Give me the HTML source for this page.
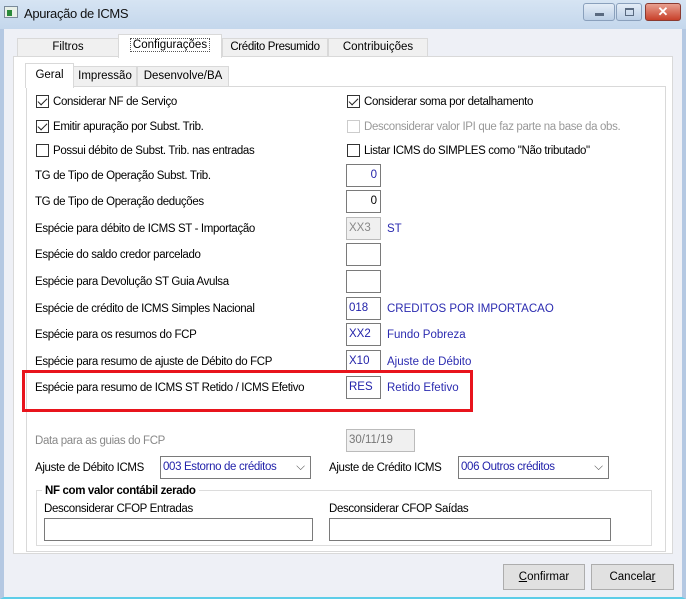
<!DOCTYPE html>
<html><head><meta charset="utf-8"><style>
*{box-sizing:border-box;margin:0;padding:0}
body{width:686px;height:599px;overflow:hidden;background:#eef0f6;font-family:"Liberation Sans",sans-serif;font-size:11.5px;color:#000;position:relative}
.a{position:absolute;white-space:nowrap}
.t{letter-spacing:-0.35px}
div.t,div.blue{margin-top:2px}
.cb{position:absolute;width:13px;height:13px;border:1px solid #333;background:#fff}
.cb.c::after{content:"";position:absolute;left:3px;top:0px;width:4px;height:8px;border:solid #222;border-width:0 1.5px 1.5px 0;transform:rotate(45deg)}
.in{position:absolute;height:23px;border:1px solid #7a7a7a;background:#fff;font-size:11.5px;line-height:21px;padding-left:2px;color:#2222aa}
.blue{color:#2b2bb0}
.btn{position:absolute;height:26px;border:1px solid #adadad;background:#e1e1e1;text-align:center;line-height:24px}
</style></head><body>
<div class="a" style="left:0;top:0;width:686px;height:599px;border:2px solid #b4c8e2;border-left-width:4px;border-right-width:4px;border-bottom-color:#5ccde8"></div>
<div class="a" style="left:0;top:0;width:686px;height:29px;background:linear-gradient(#d6e4f3,#c4d7ec)"></div>
<div class="a" style="left:4px;top:6px;width:14px;height:12px;background:#e8f0e8;border:1px solid #7a8a9a"><div style="position:absolute;left:2px;top:3px;width:5px;height:6px;background:#2a8a3a"></div></div>
<div class="a t" style="left:24px;top:6px;font-size:13px;color:#111;margin-top:0">Apuração de ICMS</div>
<div class="a" style="left:583px;top:3px;width:32px;height:18px;border:1px solid #8aa0bc;border-radius:3px;background:linear-gradient(#e4edf7,#bccfe6)"><div style="position:absolute;left:11px;top:9px;width:9px;height:3px;background:#5a6a80"></div></div>
<div class="a" style="left:616px;top:3px;width:26px;height:18px;border:1px solid #8aa0bc;border-radius:3px;background:linear-gradient(#e4edf7,#bccfe6)"><div style="position:absolute;left:8px;top:4px;width:9px;height:8px;border:1px solid #5a6a80;border-top-width:2px"></div></div>
<div class="a" style="left:645px;top:3px;width:36px;height:18px;border:1px solid #8a3a30;border-radius:3px;background:linear-gradient(#e8a090,#c8402a);color:#fff;font-weight:bold;text-align:center;line-height:16px;font-size:13px">✕</div>
<div class="a" style="left:13px;top:56px;width:660px;height:498px;background:#fff;border:1px solid #d9d9d9"></div>
<div class="a" style="left:17px;top:38px;width:102px;height:19px;background:#f0f0f0;border:1px solid #d9d9d9;text-align:center;line-height:17px">Filtros</div>
<div class="a" style="left:222px;top:38px;width:106px;height:19px;background:#f0f0f0;border:1px solid #d9d9d9;text-align:center;line-height:17px"><span class="t">Crédito Presumido</span></div>
<div class="a" style="left:328px;top:38px;width:100px;height:19px;background:#f0f0f0;border:1px solid #d9d9d9;text-align:center;line-height:17px">Contribuições</div>
<div class="a" style="left:118px;top:34px;width:104px;height:24px;background:#fff;border:1px solid #d9d9d9;border-bottom:none;text-align:center;line-height:20px"><span style="border:1px dotted #555;padding:0 2px">Configurações</span></div>
<div class="a" style="left:26px;top:86px;width:640px;height:466px;background:#fff;border:1px solid #d9d9d9"></div>
<div class="a" style="left:73px;top:66px;width:64px;height:21px;background:#f0f0f0;border:1px solid #d9d9d9;text-align:center;line-height:19px">Impressão</div>
<div class="a" style="left:137px;top:66px;width:92px;height:21px;background:#f0f0f0;border:1px solid #d9d9d9;text-align:center;line-height:19px">Desenvolve/BA</div>
<div class="a" style="left:25px;top:63px;width:49px;height:25px;background:#fff;border:1px solid #d9d9d9;border-bottom:none;text-align:center;line-height:22px">Geral</div>
<div class="cb c" style="left:36px;top:95px"></div><div class="a t" style="left:53px;top:94px">Considerar NF de Serviço</div>
<div class="cb c" style="left:36px;top:120px"></div><div class="a t" style="left:53px;top:119px">Emitir apuração por Subst. Trib.</div>
<div class="cb" style="left:36px;top:144px"></div><div class="a t" style="left:53px;top:143px">Possui débito de Subst. Trib. nas entradas</div>
<div class="cb c" style="left:347px;top:95px"></div><div class="a t" style="left:364px;top:94px">Considerar soma por detalhamento</div>
<div class="cb" style="left:347px;top:120px;border-color:#ccc"></div><div class="a t" style="left:364px;top:119px;color:#999">Desconsiderar valor IPI que faz parte na base da obs.</div>
<div class="cb" style="left:347px;top:144px"></div><div class="a t" style="left:364px;top:143px">Listar ICMS do SIMPLES como "Não tributado"</div>
<div class="a t" style="left:35px;top:168px">TG de Tipo de Operação Subst. Trib.</div><div class="in" style="left:346px;top:164px;width:35px;text-align:right;padding-right:3px">0</div>
<div class="a t" style="left:35px;top:194px">TG de Tipo de Operação deduções</div><div class="in" style="left:346px;top:190px;width:35px;text-align:right;padding-right:3px;color:#000">0</div>
<div class="a t" style="left:35px;top:221px">Espécie para débito de ICMS ST - Importação</div><div class="in" style="left:346px;top:217px;width:35px;background:#f0f0f0;border-color:#bbb;color:#888">XX3</div><div class="a blue" style="left:387px;top:221px">ST</div>
<div class="a t" style="left:35px;top:247px">Espécie do saldo credor parcelado</div><div class="in" style="left:346px;top:243px;width:35px"></div>
<div class="a t" style="left:35px;top:274px">Espécie para Devolução ST Guia Avulsa</div><div class="in" style="left:346px;top:270px;width:35px"></div>
<div class="a t" style="left:35px;top:301px">Espécie de crédito de ICMS Simples Nacional</div><div class="in" style="left:346px;top:297px;width:35px">018</div><div class="a blue" style="left:387px;top:301px">CREDITOS POR IMPORTACAO</div>
<div class="a t" style="left:35px;top:327px">Espécie para os resumos do FCP</div><div class="in" style="left:346px;top:323px;width:35px">XX2</div><div class="a blue" style="left:387px;top:327px">Fundo Pobreza</div>
<div class="a t" style="left:35px;top:354px">Espécie para resumo de ajuste de Débito do FCP</div><div class="in" style="left:346px;top:350px;width:35px">X10</div><div class="a blue" style="left:387px;top:354px">Ajuste de Débito</div>
<div class="a t" style="left:35px;top:380px">Espécie para resumo de ICMS ST Retido / ICMS Efetivo</div><div class="in" style="left:346px;top:376px;width:35px">RES</div><div class="a blue" style="left:387px;top:380px">Retido Efetivo</div>
<div class="a" style="left:22px;top:370px;width:451px;height:42px;border:3px solid #e8141c"></div>
<div class="a t" style="left:35px;top:433px;color:#888">Data para as guias do FCP</div><div class="in" style="left:346px;top:429px;width:69px;background:#f0f0f0;border-color:#bbb;color:#777">30/11/19</div>
<div class="a t" style="left:35px;top:460px">Ajuste de Débito ICMS</div>
<div class="in" style="left:160px;top:456px;width:151px"><span class="t">003 Estorno de créditos</span><span style="position:absolute;right:5px;top:0;color:#555">⌵</span></div>
<div class="a t" style="left:329px;top:460px">Ajuste de Crédito ICMS</div>
<div class="in" style="left:458px;top:456px;width:151px"><span class="t">006 Outros créditos</span><span style="position:absolute;right:5px;top:0;color:#555">⌵</span></div>
<div class="a" style="left:36px;top:490px;width:616px;height:56px;border:1px solid #dcdcdc"></div>
<div class="a t" style="left:42px;top:483px;background:#fff;padding:0 3px;font-weight:bold">NF com valor contábil zerado</div>
<div class="a t" style="left:44px;top:501px">Desconsiderar CFOP Entradas</div>
<div class="a t" style="left:329px;top:501px">Desconsiderar CFOP Saídas</div>
<div class="in" style="left:44px;top:518px;width:269px"></div>
<div class="in" style="left:329px;top:518px;width:282px"></div>
<div class="btn" style="left:503px;top:564px;width:82px"><u>C</u>onfirmar</div>
<div class="btn" style="left:591px;top:564px;width:83px">Cancela<u>r</u></div>
</body></html>
